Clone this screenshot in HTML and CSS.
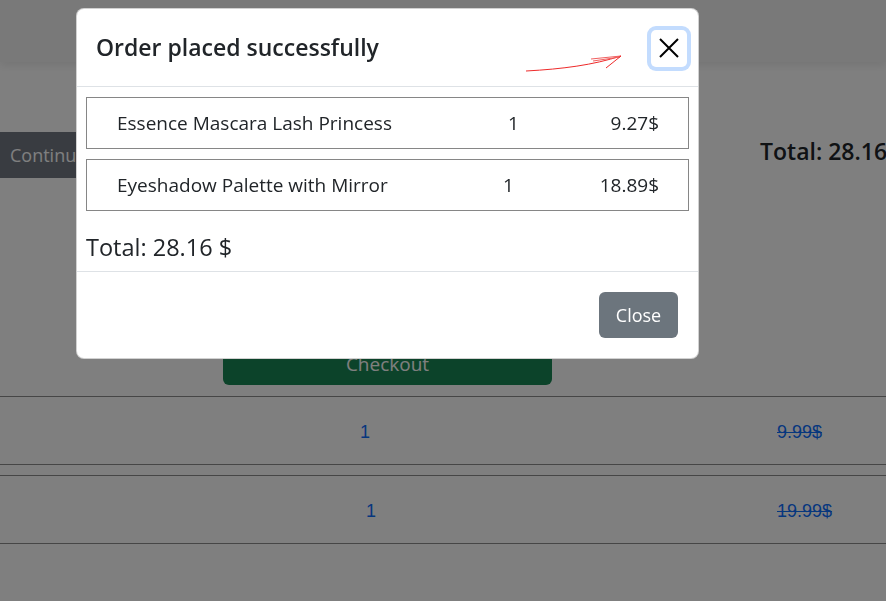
FILE: index.html
```html
<!DOCTYPE html>
<html lang="en">
<head>
<meta charset="utf-8">
<title>Cart</title>
<link rel="stylesheet" href="styles.css">
</head>
<body>
<nav class="navbar"></nav>
<main class="page">
  <section class="summary">
    <button class="btn-continue">Continue shopping</button>
    <h4 class="page-total">Total: 28.16 $</h4>
  </section>
  <div class="checkout-wrap">
    <button class="btn-checkout">Checkout</button>
  </div>
  <ul class="cart-list">
    <li class="cart-item">
      <span class="cart-qty">1</span>
      <span class="cart-price">9.99$</span>
    </li>
    <li class="cart-item">
      <span class="cart-qty cart-qty-b">1</span>
      <span class="cart-price">19.99$</span>
    </li>
  </ul>
</main>

<div class="backdrop"></div>

<div class="modal" role="dialog">
  <header class="modal-header">
    <h5 class="modal-title">Order placed successfully</h5>
    <svg class="annotation" width="120" height="30" viewBox="0 0 120 30">
      <path d="M3 22 C 40 20, 70 16, 98 7" fill="none" stroke="#ee2a2a" stroke-width="1"/>
      <path d="M68 10 L 98 7 M70 12 L 97 8" fill="none" stroke="#f06060" stroke-width="1"/>
      <path d="M98 7 L 83 19" fill="none" stroke="#ee2a2a" stroke-width="1"/>
    </svg>
    <button class="btn-close" aria-label="Close">
      <svg width="20" height="20" viewBox="0 0 20 20">
        <path d="M1 1 L19 19 M19 1 L1 19" stroke="#000" stroke-width="2" fill="none"/>
      </svg>
    </button>
  </header>
  <div class="modal-body">
    <div class="order-row">
      <span class="order-name">Essence Mascara Lash Princess</span>
      <span class="order-qty">1</span>
      <span class="order-price">9.27$</span>
    </div>
    <div class="order-row">
      <span class="order-name">Eyeshadow Palette with Mirror</span>
      <span class="order-qty order-qty-b">1</span>
      <span class="order-price">18.89$</span>
    </div>
    <h4 class="order-total">Total: 28.16 $</h4>
  </div>
  <footer class="modal-footer">
    <button class="btn-secondary">Close</button>
  </footer>
</div>
</body>
</html>
```

FILE: styles.css
```css
* { box-sizing: border-box; }

html, body {
  margin: 0;
  padding: 0;
  width: 886px;
  height: 601px;
  overflow: hidden;
  background: #fff;
  font-family: "Open Sans", "Noto Sans", sans-serif;
  color: #212529;
}

.navbar {
  height: 62px;
  background: #f3f3f3;
  box-shadow: 0 4px 8px rgba(0,0,0,0.08);
}

.page {
  display: flex;
  flex-direction: column;
}

.summary {
  display: flex;
  justify-content: space-between;
  align-items: flex-start;
  margin-top: 70px;
}

.btn-continue {
  height: 46px;
  padding: 0 10px;
  border: none;
  border-radius: 0 6px 6px 0;
  background: #727983;
  color: #fff;
  font-family: inherit;
  font-size: 18px;
  width: 200px;
  text-align: left;
}

.page-total {
  margin: 3px -30px 0 0;
  font-size: 23px;
  font-weight: 600;
  white-space: nowrap;
  width: 156px;
}

.checkout-wrap {
  padding-left: 223px;
  margin-top: 165px;
}

.btn-checkout {
  width: 329px;
  height: 42px;
  border: none;
  border-radius: 6px;
  background: #198754;
  color: #fff;
  font-family: inherit;
  font-size: 19px;
}

.cart-list {
  list-style: none;
  margin: 11px 0 0;
  padding: 0;
  display: flex;
  flex-direction: column;
  gap: 10px;
}

.cart-item {
  display: flex;
  align-items: center;
  height: 69px;
  padding-top: 4px;
  border-top: 1px solid #8c8c8c;
  border-bottom: 1px solid #8c8c8c;
  font-family: "Liberation Sans", Arial, sans-serif;
  font-size: 18px;
  color: #0d6efd;
}

.cart-qty {
  margin-left: 360px;
  width: 417px;
}

.cart-qty-b { margin-left: 366px; width: 411px; }

.cart-price { text-decoration: line-through; }

.backdrop {
  position: fixed;
  inset: 0;
  background: rgba(0,0,0,0.5);
}

.modal {
  position: absolute;
  top: 8px;
  left: 76px;
  width: 623px;
  background: #fff;
  border: 1px solid rgba(0,0,0,0.18);
  border-radius: 8px;
  display: flex;
  flex-direction: column;
}

.modal-header {
  position: relative;
  display: flex;
  align-items: center;
  justify-content: space-between;
  height: 78px;
  padding: 0 11px 0 19px;
  border-bottom: 1px solid #dee2e6;
}

.modal-title {
  margin: 0;
  font-size: 23px;
  font-weight: 600;
  line-height: 1.2;
}

.annotation {
  position: absolute;
  left: 446px;
  top: 40px;
  pointer-events: none;
}

.btn-close {
  width: 36px;
  height: 37px;
  display: flex;
  align-items: center;
  justify-content: center;
  padding: 0;
  border: none;
  border-radius: 5px;
  background: #fff;
  box-shadow: 0 0 0 4px #c3dcfe;
  margin-top: 1px;
}

.modal-body {
  padding: 10px 9px 0 9px;
  height: 184px;
}

.order-row {
  display: grid;
  grid-template-columns: 1fr 80px 100px;
  align-items: center;
  height: 52px;
  padding: 0 29px 0 30px;
  border: 1px solid #868686;
  margin-bottom: 10px;
  font-size: 19px;
}

.order-name { font-weight: 500; white-space: nowrap; }

.order-qty { padding-left: 29px; }
.order-qty-b { padding-left: 24px; }

.order-price { text-align: right; }

.order-total {
  margin: 20px 0 0;
  font-size: 23.5px;
  font-weight: 500;
}

.modal-footer {
  display: flex;
  justify-content: flex-end;
  padding: 20px 20px 20px;
  border-top: 1px solid #dee2e6;
}

.btn-secondary {
  width: 79px;
  height: 46px;
  border: none;
  border-radius: 6px;
  background: #6c757d;
  color: #fff;
  font-family: inherit;
  font-size: 18px;
}
```
